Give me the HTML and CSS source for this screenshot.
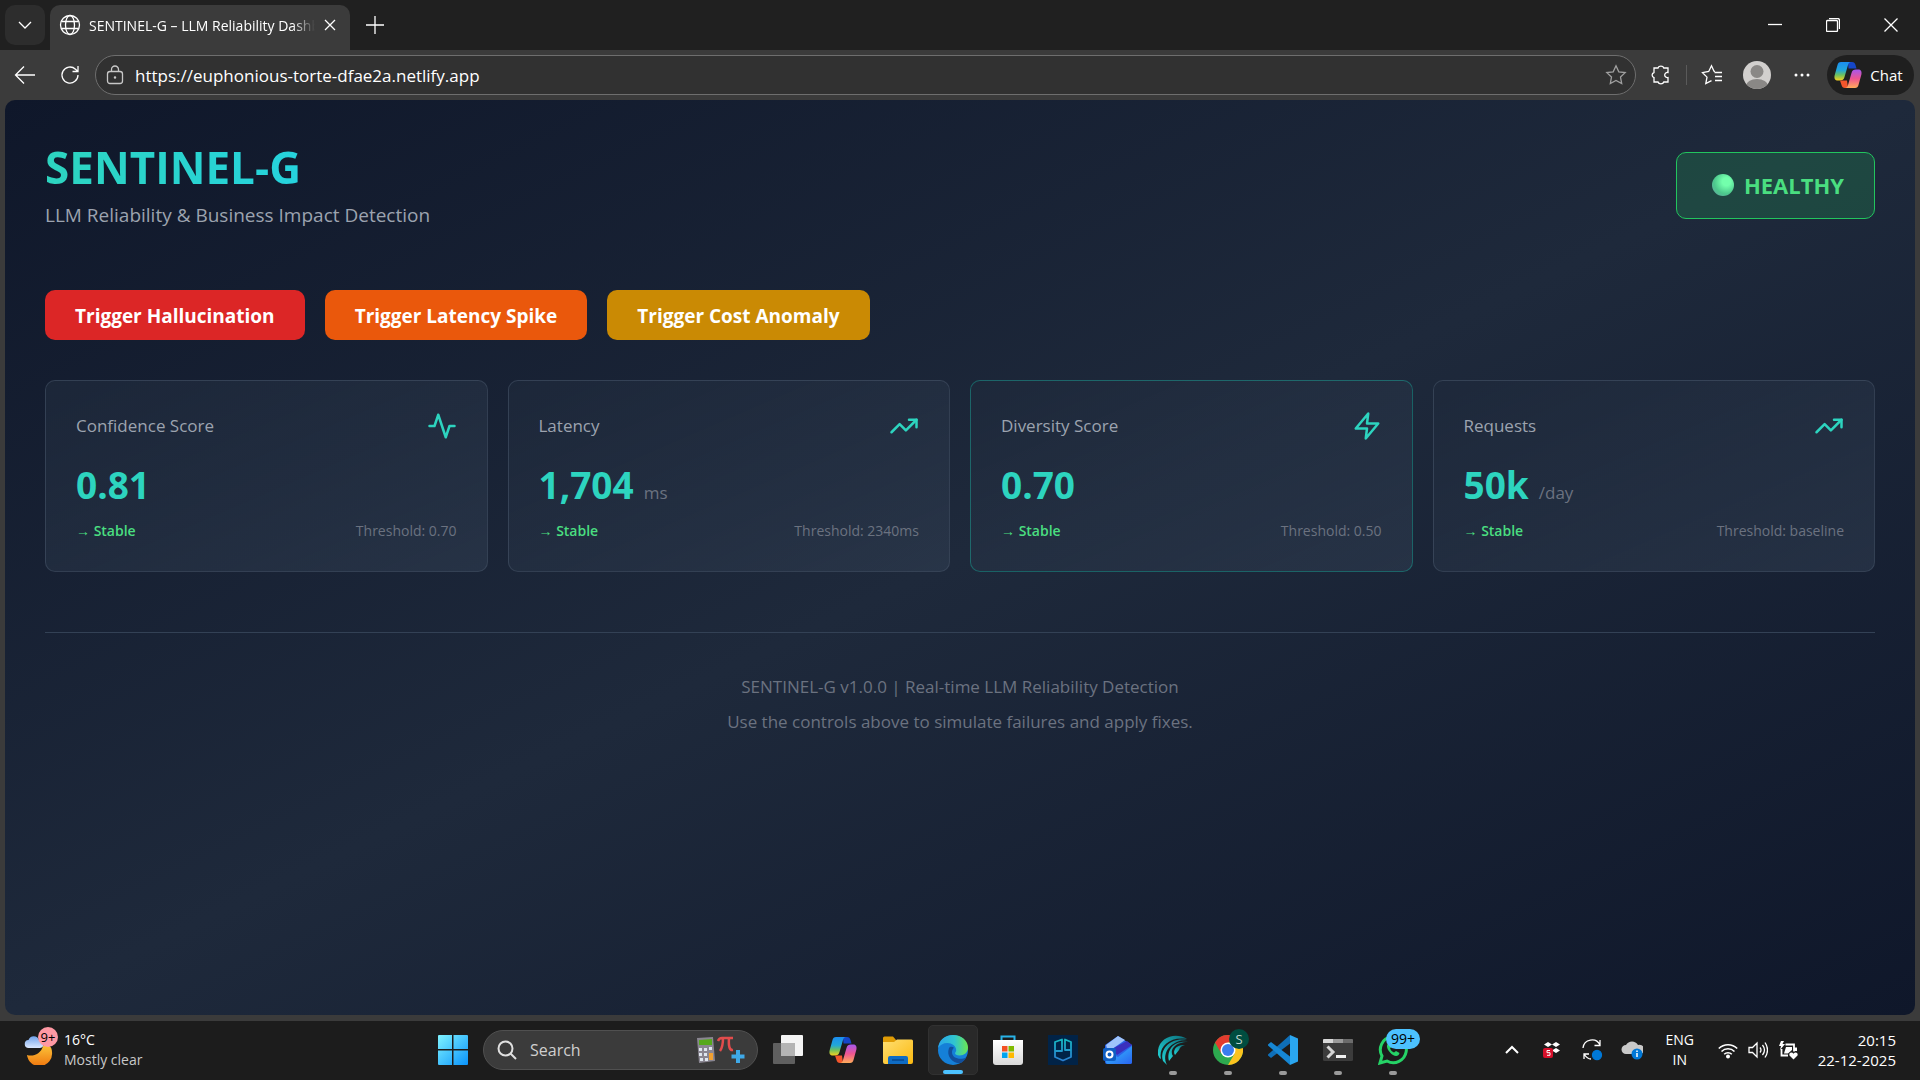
FILE: index.html
```html
<!DOCTYPE html>
<html lang="en">
<head>
    <meta charset="UTF-8">
    <meta name="viewport" content="width=device-width, initial-scale=1.0">
    <title>SENTINEL-G – LLM Reliability Dashboard</title>
    <link rel="stylesheet" href="styles.css">
</head>
<body>
    <!-- Shared symbols -->
    <svg class="defs" aria-hidden="true">
        <defs>
            <linearGradient id="copA" x1="0" y1="0" x2="0" y2="1">
                <stop offset="0" stop-color="#1b8df0"/><stop offset=".45" stop-color="#22a7d8"/>
                <stop offset=".7" stop-color="#6cc060"/><stop offset="1" stop-color="#f5d21f"/>
            </linearGradient>
            <linearGradient id="copB" x1="0" y1="0" x2="0" y2="1">
                <stop offset="0" stop-color="#a557ee"/><stop offset=".5" stop-color="#ee5590"/>
                <stop offset="1" stop-color="#ffac5a"/>
            </linearGradient>
            <linearGradient id="gWin" x1="0" y1="0" x2="1" y2="1">
                <stop offset="0" stop-color="#7ff3ff"/><stop offset="1" stop-color="#0a93fb"/>
            </linearGradient>
            <linearGradient id="gMoon" x1="0" y1="0" x2="0" y2="1">
                <stop offset="0" stop-color="#fbc43a"/><stop offset="1" stop-color="#f0780f"/>
            </linearGradient>
            <linearGradient id="gCloud" x1="0" y1="0" x2="0" y2="1">
                <stop offset="0" stop-color="#6fa2ea"/><stop offset="1" stop-color="#dbe8ff"/>
            </linearGradient>
            <linearGradient id="gFolder" x1="0" y1="0" x2="1" y2="1">
                <stop offset="0" stop-color="#ffdf72"/><stop offset="1" stop-color="#fbb910"/>
            </linearGradient>
            <linearGradient id="gEdge" x1="0" y1="0" x2="1" y2="0">
                <stop offset="0" stop-color="#2aa5ea"/><stop offset=".55" stop-color="#30c5cf"/><stop offset="1" stop-color="#6be650"/>
            </linearGradient>
            <linearGradient id="gBag" x1="0" y1="0" x2="0" y2="1">
                <stop offset="0" stop-color="#ffffff"/><stop offset="1" stop-color="#d9d9d9"/>
            </linearGradient>
            <linearGradient id="gTeal" x1="1" y1="0" x2="0" y2="1">
                <stop offset="0" stop-color="#0b6f7c"/><stop offset="1" stop-color="#22d3d6"/>
            </linearGradient>
            <linearGradient id="gMail" x1="0" y1="0" x2="1" y2="1">
                <stop offset="0" stop-color="#35c5ff"/><stop offset="1" stop-color="#2a63f0"/>
            </linearGradient>
            <linearGradient id="gHead" x1="0" y1="0" x2="0" y2="1">
                <stop offset="0" stop-color="#17b8c4"/><stop offset="1" stop-color="#2a7fd0"/>
            </linearGradient>
        </defs>
        <symbol id="copilot" viewBox="0 0 28 28">
            <path d="M14 1h4c2 0 3 1 3.500 3l1 3.500h-8z" fill="#1546c8"/>
            <path d="M7 1h10c-1.500 0-2.500 1-3 3l-3.500 12c-.8 2.600-2 3.500-4.500 3.500H4c-3 0-4-2-3.400-5L3.500 4C4 2 5 1 7 1z" fill="url(#copA)"/>
            <path d="M6 19.500h7l1 7.500h-3c-2 0-3-1-3.500-3z" fill="#f4562c"/>
            <path d="M21 27H11c1.500 0 2.500-1 3-3l3.500-12c.8-2.600 2-3.500 4.500-3.500h2c3 0 4 2 3.400 5L24.500 24c-.5 2-1.500 3-3.500 3z" fill="url(#copB)"/>
        </symbol>
        <symbol id="trend" viewBox="0 0 24 24">
            <path d="M22 7l-8.500 8.500-5-5L2 17"/>
            <path d="M16 7h6v6"/>
        </symbol>
    </svg>

    <div class="browser">
        <!-- Tab strip -->
        <div class="tab-strip">
            <button class="tab-menu" aria-label="Tab actions">
                <svg width="16" height="16" viewBox="0 0 16 16" class="line"><path d="M2 5l6 6 6-6"/></svg>
            </button>
            <div class="tab">
                <svg width="22" height="22" viewBox="0 0 22 22" class="line">
                    <circle cx="11" cy="11" r="9.500"/><ellipse cx="11" cy="11" rx="4.500" ry="9.500"/><path d="M2.500 7.500h17M2.500 14.500h17"/>
                </svg>
                <span class="tab-title">SENTINEL-G – LLM Reliability Dashboard</span>
                <button class="tab-close" aria-label="Close tab">
                    <svg width="12" height="12" viewBox="0 0 12 12" class="line"><path d="M1 1l10 10M11 1L1 11"/></svg>
                </button>
            </div>
            <button class="new-tab" aria-label="New tab">
                <svg width="20" height="20" viewBox="0 0 20 20" class="line"><path d="M10 1v18M1 10h18"/></svg>
            </button>
            <div class="window-controls">
                <button aria-label="Minimize"><svg width="14" height="14" viewBox="0 0 14 14" class="line"><path d="M0 6.500h14"/></svg></button>
                <button aria-label="Restore"><svg width="14" height="14" viewBox="0 0 14 14" class="line"><rect x=".5" y="2.500" width="11" height="11" rx="1"/><path d="M3 .5h8.500q2 0 2 2V11"/></svg></button>
                <button aria-label="Close"><svg width="14" height="14" viewBox="0 0 14 14" class="line"><path d="M.5.5l13 13M13.500.5l-13 13"/></svg></button>
            </div>
        </div>

        <!-- Address bar -->
        <div class="toolbar">
            <button class="tool" aria-label="Back">
                <svg width="22" height="20" viewBox="0 0 22 20" class="line"><path d="M21 10H1.500M10 1.500L1.500 10l8.500 8.500"/></svg>
            </button>
            <button class="tool" aria-label="Refresh">
                <svg width="20" height="20" viewBox="0 0 20 20" class="line"><path d="M18 10a8 8 0 1 1-2.500-5.800L18 6.500M18 1v5.500h-5.500"/></svg>
            </button>
            <div class="address">
                <svg width="18" height="20" viewBox="0 0 18 20" class="line light"><rect x="1.500" y="6.500" width="15" height="12" rx="2.500"/><path d="M5.500 6.500V4.500a3.500 3.500 0 0 1 7 0v2"/><circle cx="9" cy="12.500" r=".6"/></svg>
                <input type="text" aria-label="Address" value="https://euphonious-torte-dfae2a.netlify.app">
                <svg width="22" height="22" viewBox="0 0 22 22" class="line dim"><path d="M11 1.800l2.800 6 6.400.8-4.700 4.500 1.200 6.500L11 16.400l-5.700 3.200 1.200-6.500L1.800 8.600l6.400-.8z"/></svg>
            </div>
            <button class="tool" aria-label="Extensions">
                <svg width="22" height="22" viewBox="0 0 22 22" class="line"><path d="M4 4h4a3 2.600 0 0 1 5.800 0H18v4.500a2.600 2.600 0 1 0 0 5V18h-4.200a3 2.600 0 0 1-5.800 0H4v-4.500a2.600 2.600 0 0 1 0-5z"/></svg>
            </button>
            <span class="tool-sep"></span>
            <button class="tool" aria-label="Favorites">
                <svg width="22" height="22" viewBox="0 0 22 22" class="line"><path d="M14 7.500L13 7.300 10.500 1.800 7.700 7.500 1.500 8.600l4.500 4.500-1.200 6.500 5.700-3"/><path d="M13.500 8.500H21M14 12.500h7M14 16.500h7"/></svg>
            </button>
            <button class="tool" aria-label="Profile">
                <svg width="28" height="28" viewBox="0 0 28 28"><defs><clipPath id="av"><circle cx="14" cy="14" r="14"/></clipPath></defs><g clip-path="url(#av)"><rect width="28" height="28" fill="#d2d0ce"/><circle cx="14" cy="10.500" r="6.500" fill="#8a8886"/><ellipse cx="14" cy="25" rx="11" ry="7" fill="#8a8886"/></g></svg>
            </button>
            <button class="tool" aria-label="More">
                <svg width="16" height="4" viewBox="0 0 16 4" fill="#fff"><circle cx="2" cy="2" r="1.500"/><circle cx="8" cy="2" r="1.500"/><circle cx="14" cy="2" r="1.500"/></svg>
            </button>
            <button class="chat"><svg width="28" height="28"><use href="#copilot"/></svg>Chat</button>
        </div>

        <!-- Dashboard -->
        <main class="page">
            <header class="page-header">
                <div>
                    <h1>SENTINEL-G</h1>
                    <p class="subtitle">LLM Reliability &amp; Business Impact Detection</p>
                </div>
                <div class="status"><span class="status-dot"></span>HEALTHY</div>
            </header>

            <div class="controls">
                <button class="btn btn-red">Trigger Hallucination</button>
                <button class="btn btn-orange">Trigger Latency Spike</button>
                <button class="btn btn-yellow">Trigger Cost Anomaly</button>
            </div>

            <div class="cards">
                <section class="card">
                    <div class="card-head">
                        <h2>Confidence Score</h2>
                        <svg class="card-icon" viewBox="0 0 24 24"><path d="M22 12h-4l-3 9L9 3l-3 9H2"/></svg>
                    </div>
                    <div class="value">0.81</div>
                    <div class="card-foot"><span class="trend">→ Stable</span><span>Threshold: 0.70</span></div>
                </section>
                <section class="card">
                    <div class="card-head">
                        <h2>Latency</h2>
                        <svg class="card-icon"><use href="#trend"/></svg>
                    </div>
                    <div class="value">1,704<span class="unit">ms</span></div>
                    <div class="card-foot"><span class="trend">→ Stable</span><span>Threshold: 2340ms</span></div>
                </section>
                <section class="card card-active">
                    <div class="card-head">
                        <h2>Diversity Score</h2>
                        <svg class="card-icon" viewBox="0 0 24 24"><path d="M13 2L3 14h9l-1 8 10-12h-9z"/></svg>
                    </div>
                    <div class="value">0.70</div>
                    <div class="card-foot"><span class="trend">→ Stable</span><span>Threshold: 0.50</span></div>
                </section>
                <section class="card">
                    <div class="card-head">
                        <h2>Requests</h2>
                        <svg class="card-icon"><use href="#trend"/></svg>
                    </div>
                    <div class="value">50k<span class="unit">/day</span></div>
                    <div class="card-foot"><span class="trend">→ Stable</span><span>Threshold: baseline</span></div>
                </section>
            </div>

            <footer class="page-footer">
                <p>SENTINEL-G v1.0.0 | Real-time LLM Reliability Detection</p>
                <p>Use the controls above to simulate failures and apply fixes.</p>
            </footer>
        </main>
    </div>

    <!-- Taskbar -->
    <div class="taskbar">
        <div class="weather">
            <div class="weather-icon">
                <svg width="30" height="30" viewBox="0 0 30 30">
                    <path d="M3 20c6 2 14-1 16-9 3-2 9-1 9 6a12.500 12.500 0 0 1-25 3z" fill="url(#gMoon)"/>
                    <path d="M5 13a4 4 0 0 1-.5-8 5.500 5.500 0 0 1 10.500 0 4 4 0 0 1 1 8z" fill="url(#gCloud)"/>
                </svg>
                <span class="weather-badge">9+</span>
            </div>
            <div class="weather-text"><span>16°C</span><span class="muted">Mostly clear</span></div>
        </div>

        <div class="apps">
            <button class="app" aria-label="Start">
                <svg width="30" height="30" viewBox="0 0 30 30" fill="url(#gWin)"><path d="M1 0h13v14H0V1q0-1 1-1zM15.500 0H29q1 0 1 1v13H15.500zM0 15.500h14V30H1q-1 0-1-1zM15.500 15.500H30V29q0 1-1 1H15.500z"/></svg>
            </button>
            <label class="search">
                <svg width="20" height="20" viewBox="0 0 20 20" fill="none" stroke="#e0e0e0" stroke-width="2"><circle cx="8.500" cy="8.500" r="7"/><path d="M13.500 13.500L19 19"/></svg>
                <input type="text" placeholder="Search">
                <svg width="50" height="28" viewBox="0 0 50 28">
                    <path d="M1 2l16-1 2 24-16 2z" fill="#8a8691"/><path d="M3 4l13-1v6H3z" fill="#56a81c"/>
                    <path d="M3 12h3v3H3zM8 12h3v3H8zM13 11h3v3h-3zM3 17h3v3H3zM8 17h3v3H8zM4 22h3v3H4zM9 22h3v3H9z" fill="#dfe6ee"/><path d="M13 17h4v7h-4z" fill="#f0a030"/>
                    <path d="M22 5q1-3 4-3h11M27 2q0 9-3 13M33 2q-1 13 4 12" fill="none" stroke="#e24c4c" stroke-width="2.500"/>
                    <path d="M42 14v13M35.500 20.500h13" stroke="#3fa9e8" stroke-width="4"/>
                </svg>
            </label>
            <button class="app" aria-label="Task view">
                <svg width="30" height="30" viewBox="0 0 30 30"><rect y="8" width="22" height="21" rx="1" fill="#5f5f5f"/><rect x="8" width="22" height="21" rx="1" fill="#f4f4f4"/><path d="M8 8h14v13H8z" fill="#b4b4b4"/></svg>
            </button>
            <button class="app" aria-label="Copilot"><svg width="28" height="28"><use href="#copilot"/></svg></button>
            <button class="app" aria-label="File Explorer">
                <svg width="30" height="28" viewBox="0 0 30 28"><path d="M0 2q0-1.500 1.500-1.500H10L13 4v4H0z" fill="#e09c05"/><path d="M0 6h11l3-2.500h14.500Q30 3.500 30 5v21q0 2-2 2H2q-2 0-2-2z" fill="url(#gFolder)"/><path d="M5 28v-6q0-2 2-2h16q2 0 2 2v6z" fill="#0f6cc4"/><path d="M9 24h12" stroke="#07478f" stroke-width="1.500"/></svg>
            </button>
            <button class="app app-active" aria-label="Microsoft Edge">
                <svg width="32" height="32" viewBox="0 0 32 32"><circle cx="16" cy="16" r="15" fill="#1580d8"/><path d="M1 14C2 6 8 1 16 1c9 0 15 6 15 12.500 0 5-4 8-8.500 8-3 0-4.500-1-4.500-2.200 0-1 1.200-1.300 1.200-3.300C19 12 15 9 10.500 9 6 9 3 11 1 14z" fill="url(#gEdge)"/><path d="M12 14c-3 8 3 15 11 15.300 3-1.300 5-3.300 6.300-5.800C24 26 15 25 15 18c0-2 1-3.500 2-4.300-1.500-1.200-4-1.500-5 .3z" fill="#124f9c"/></svg>
            </button>
            <button class="app" aria-label="Microsoft Store">
                <svg width="30" height="30" viewBox="0 0 30 30"><path d="M8.500 6V1.500h13V6" fill="none" stroke="#28b3e8" stroke-width="2"/><path d="M0 5h30v22q0 3-3 3H3q-3 0-3-3z" fill="url(#gBag)"/><path d="M9 11h5.500v5.500H9z" fill="#f25022"/><path d="M15.500 11H21v5.500h-5.500z" fill="#7fba00"/><path d="M9 17.500h5.500V23H9z" fill="#00a4ef"/><path d="M15.500 17.500H21V23h-5.500z" fill="#ffb900"/></svg>
            </button>
            <button class="app" aria-label="Assistant">
                <svg width="30" height="30" viewBox="0 0 30 30"><path d="M0 0h30v30H0z" fill="#012347"/><path d="M14 4.500L7 7v9h7zM17 4.500L23 7v8h-6zM7 15v7l8 3.500 8-3.500v-8" fill="none" stroke="url(#gHead)" stroke-width="1.800" stroke-linejoin="round"/></svg>
            </button>
            <button class="app" aria-label="Outlook">
                <svg width="30" height="30" viewBox="0 0 30 30"><path d="M2 10L15 1l14 9v17q0 2-2 2H4q-2 0-2-2z" fill="#2b62e8"/><path d="M3 10L15 1l7 4L5 17z" fill="#9fc4fb"/><path d="M9 14L24 6l5 4L14 20z" fill="#3a2fbd"/><path d="M3 17l12 5 14-11v16q0 2-2 2H5q-2 0-2-2z" fill="url(#gMail)"/><rect y="13" width="13" height="13" rx="2" fill="#0f5fc4"/><circle cx="6.500" cy="19.500" r="3" fill="none" stroke="#fff" stroke-width="2"/></svg>
            </button>
            <button class="app app-open" aria-label="Music">
                <svg width="30" height="30" viewBox="0 0 30 30" fill="url(#gTeal)"><path d="M29 4C16-4-2 4 0 20q1 3 3 4C0 12 12 1 29 4z"/><path d="M29 5C14 2 1 13 5 26l4 4C3 18 13 5 29 5z"/><path d="M30 7C17 5 8 14 11 26l4-5C11 14 18 7 30 7z"/><path d="M27 10c-8-1-13 5-10 10l4-5q1-4 6-5z"/></svg>
            </button>
            <button class="app app-open" aria-label="Google Chrome">
                <svg width="30" height="30" viewBox="0 0 30 30"><circle cx="15" cy="15" r="15" fill="#2da94f"/><path d="M2 7.500A15 15 0 0 1 28 7.500H15L8.500 18.700z" fill="#e33b2e"/><path d="M28 7.500A15 15 0 0 1 15 30l6.500-11.300L15 7.500z" fill="#fcc31e"/><circle cx="15" cy="15" r="7.500" fill="#fff"/><circle cx="15" cy="15" r="6" fill="#3b7ded"/></svg>
                <span class="badge badge-profile">S</span>
            </button>
            <button class="app app-open" aria-label="Visual Studio Code">
                <svg width="30" height="30" viewBox="0 0 30 30"><path d="M22 0l8 3.500v23L22 30z" fill="#2aa6f0"/><path d="M22 0v8.500L3 23l-3-2.500v-1z" fill="#0f6fb8"/><path d="M22 30v-8.500L3 7 0 9.500v1z" fill="#1687d4"/></svg>
            </button>
            <button class="app app-open" aria-label="Terminal">
                <svg width="30" height="22" viewBox="0 0 30 22"><rect width="30" height="22" rx="1.500" fill="#3c3c3c"/><path d="M1 0h9v4H0V1q0-1 1-1z" fill="#d8d8d8"/><path d="M10 0h10v4H10z" fill="#9b9b9b"/><path d="M20 0h9q1 0 1 1v3H20z" fill="#6c6c6c"/><path d="M4.500 7.500L10 13l-5.500 5.500" fill="none" stroke="#d6d6d6" stroke-width="3"/><path d="M13 17.500h10" stroke="#f2f2f2" stroke-width="3"/></svg>
            </button>
            <button class="app app-open" aria-label="WhatsApp">
                <svg width="30" height="30" viewBox="0 0 30 30"><path d="M2 28l2-7A13 13 0 1 1 9 26z" fill="none" stroke="#25d366" stroke-width="3"/><path d="M10 8.500c-3 3 1 9 5 11.500 3 2 6 1 6.500-2l-3.500-2-2 1.500c-2-1-3-2-4-4l1.500-1.500L12 8.500z" fill="#25d366"/></svg>
                <span class="badge badge-count">99+</span>
            </button>
        </div>

        <div class="tray">
            <button aria-label="Show hidden icons"><svg width="16" height="16" viewBox="0 0 16 16" fill="none" stroke="#fff" stroke-width="2"><path d="M2 11l6-6 6 6"/></svg></button>
            <button aria-label="Dropbox"><svg width="20" height="20" viewBox="0 0 20 20"><path d="M6 2l4 2.500L6 7 2 4.500zM14 2l4 2.500L14 7l-4-2.500zM14 8l4 2.500-4 2.500-4-2.500z" fill="#fff"/><rect x="1" y="8" width="10" height="10" rx="2" fill="#d6102b"/><path d="M8 10.500H5v2.200h3v2.600H5" fill="none" stroke="#fff"/></svg></button>
            <button aria-label="Updates"><svg width="22" height="22" viewBox="0 0 22 22" class="line"><path d="M2 9a9 9 0 0 1 17-3M19 1v5.500h-5.500M3 20v-5h5M3 15c2 3 4 5 7 5"/><circle cx="16" cy="16" r="4.500" fill="#0078d7" stroke="#0078d7"/></svg></button>
            <button aria-label="OneDrive"><svg width="22" height="22" viewBox="0 0 22 22"><path d="M5 15a4.500 4.500 0 0 1 0-9 7 7 0 0 1 12 0 4.500 4.500 0 0 1 3 9z" fill="#c9c9c9"/><circle cx="16" cy="15" r="5.500" fill="#0078d7"/><path d="M16 14v4M16 11.500V13" stroke="#fff" stroke-width="1.500"/></svg></button>
            <div class="lang"><span>ENG</span><span>IN</span></div>
            <div class="quick">
                <svg width="20" height="20" viewBox="0 0 20 20" fill="none" stroke="#fff" stroke-width="1.600"><path d="M.8 8.500a13 13 0 0 1 18.400 0M3.500 11.500a9.200 9.200 0 0 1 13 0M6.200 14.300a5.400 5.400 0 0 1 7.600 0"/><circle cx="10" cy="16.500" r="1.200" fill="#fff"/></svg>
                <svg width="20" height="20" viewBox="0 0 20 20" class="line"><path d="M1 7.500h3.500L9 3v14l-4.500-4.500H1zM12 7.500q2 2.500 0 5M14.500 5q4 5 0 10M17 2.500q5 7.500 0 15"/></svg>
                <svg width="20" height="20" viewBox="0 0 20 20"><path d="M7.500 4.500H16v7M3.500 9v6.500H10" fill="none" stroke="#fff" stroke-width="1.800"/><path d="M8 7h6v3l-4 3.500H6z" fill="#fff"/><path d="M3 1L1 6h2L2 10l5-6H4.500L6 1z" fill="#fff"/><path d="M16 11h3V7.500h-3z" fill="#fff"/><path d="M15.500 19.500l-4-4c-1-3 2.500-4 4-1.800 1.500-2.200 5-1.200 4 1.800z" fill="#fff"/></svg>
            </div>
            <div class="clock"><span>20:15</span><span>22-12-2025</span></div>
        </div>
    </div>
</body>
</html>
```
FILE: styles.css
```css
* {
    box-sizing: border-box;
}

body {
    font-family: "Open Sans", "Noto Sans", sans-serif;
    margin: 0;
    min-height: 100vh;
    display: flex;
    flex-direction: column;
    background-color: #3b3b3b;
    color: #ffffff;
}

h1, h2, p {
    margin: 0;
}

button {
    font-family: inherit;
    color: inherit;
    background: none;
    border: none;
    padding: 0;
    cursor: pointer;
    display: flex;
    align-items: center;
    justify-content: center;
}

input {
    font-family: inherit;
    color: #ffffff;
    background: none;
    border: none;
    outline: none;
    padding: 0;
    flex: 1;
    min-width: 0;
}

svg {
    flex-shrink: 0;
}

.defs {
    position: absolute;
    width: 0;
    height: 0;
}

.line {
    fill: none;
    stroke: #ffffff;
    stroke-width: 1.3;
}

.light {
    stroke: #c8c8c8;
}

.dim {
    stroke: #a0a0a0;
}

/* Browser window */
.browser {
    flex: 1;
    display: flex;
    flex-direction: column;
}

.tab-strip {
    display: flex;
    align-items: center;
    height: 50px;
    padding-left: 5px;
    gap: 5px;
    background: #202020;
}

.tab-menu {
    width: 40px;
    height: 40px;
    border-radius: 10px;
    background: #2d2d2d;
}

.tab {
    display: flex;
    align-items: center;
    align-self: flex-end;
    width: 300px;
    height: 45px;
    padding: 0 13px 5px 9px;
    gap: 8px;
    background: #3b3b3b;
    border-radius: 10px 10px 0 0;
}

.tab-title {
    flex: 1;
    overflow: hidden;
    white-space: nowrap;
    font-size: 14px;
    -webkit-mask-image: linear-gradient(to right, #000 90%, transparent);
    mask-image: linear-gradient(to right, #000 90%, transparent);
}

.tab-close {
    width: 14px;
    height: 22px;
}

.new-tab {
    width: 40px;
    height: 40px;
}

.window-controls {
    display: flex;
    margin-left: auto;
}

.window-controls button {
    width: 58px;
    height: 50px;
}

.toolbar {
    display: flex;
    align-items: center;
    height: 50px;
    padding: 0 6px 0 5px;
    gap: 5px;
}

.tool {
    width: 40px;
    height: 40px;
}

.tool-sep {
    width: 1px;
    height: 20px;
    background: #5a5a5a;
}

.address {
    flex: 1;
    display: flex;
    align-items: center;
    height: 40px;
    padding: 0 8px 0 10px;
    gap: 11px;
    background: #313131;
    border: 1px solid #6e6e6e;
    border-radius: 20px;
}

.address input {
    font-size: 17px;
}

.chat {
    width: 87px;
    height: 40px;
    padding-right: 4px;
    gap: 8px;
    font-size: 15px;
    background: #1f1f1f;
    border-radius: 20px;
}

/* Dashboard */
.page {
    flex: 1;
    margin: 0 5px 6px;
    padding: 40px;
    border-radius: 10px;
    background: linear-gradient(to bottom right, #0f172a, #1e293b, #0f172a);
}

.page-header {
    display: flex;
    justify-content: space-between;
    align-items: center;
    margin-bottom: 60px;
}

.page-header h1 {
    margin-bottom: 6px;
    font-size: 44px;
    line-height: 55px;
    font-weight: 700;
    background: linear-gradient(to right, #2dd4bf, #22d3ee);
    -webkit-background-clip: text;
    background-clip: text;
    color: transparent;
}

.subtitle {
    font-size: 19px;
    line-height: 29px;
    color: #9ca3af;
}

.status {
    display: flex;
    align-items: center;
    height: 67px;
    padding: 0 30px 0 35px;
    gap: 10px;
    font-size: 22px;
    font-weight: 700;
    color: #4ade80;
    background: rgba(34, 197, 94, 0.2);
    border: 1px solid #22c55e;
    border-radius: 10px;
}

.status-dot {
    width: 22px;
    height: 22px;
    border-radius: 50%;
    background: radial-gradient(circle at 65% 35%, #73ffac 20%, #4cc78c 60%, #6aa0a8 100%);
}

.controls {
    display: flex;
    gap: 20px;
    margin-bottom: 40px;
}

.btn {
    height: 50px;
    padding: 1px 30px 0;
    font-size: 19px;
    font-weight: 700;
    border-radius: 10px;
}

.btn-red {
    background: #dc2626;
}

.btn-orange {
    background: #ea580c;
}

.btn-yellow {
    background: #ca8a04;
}

.cards {
    display: grid;
    grid-template-columns: repeat(4, 1fr);
    gap: 20px;
    margin-bottom: 60px;
}

.card {
    padding: 30px;
    border: 1px solid rgba(71, 85, 105, 0.5);
    border-radius: 10px;
    background: linear-gradient(to bottom right, rgba(30, 41, 59, 0.8), rgba(51, 65, 85, 0.5));
}

.card-active {
    border-color: rgba(20, 184, 166, 0.4);
}

.card-head {
    display: flex;
    justify-content: space-between;
    align-items: center;
    margin-bottom: 15px;
}

.card-head h2 {
    font-size: 17px;
    line-height: 30px;
    font-weight: 500;
    color: #9ca3af;
}

.card-icon {
    width: 30px;
    height: 30px;
    fill: none;
    stroke: #2dd4bf;
    stroke-width: 2;
    stroke-linecap: round;
    stroke-linejoin: round;
}

.value {
    display: flex;
    align-items: baseline;
    gap: 10px;
    height: 58px;
    margin-bottom: 7px;
    font-size: 37px;
    line-height: 58px;
    font-weight: 700;
    color: #2dd4bf;
}

.unit {
    font-size: 17px;
    line-height: 20px;
    font-weight: 400;
    color: #6b7280;
}

.card-foot {
    display: flex;
    justify-content: space-between;
    font-size: 14px;
    line-height: 20px;
    color: #6b7280;
}

.trend {
    font-weight: 600;
    color: #4ade80;
}

.page-footer {
    display: flex;
    flex-direction: column;
    gap: 7px;
    padding-top: 40px;
    border-top: 1px solid #334155;
    text-align: center;
    font-size: 17px;
    line-height: 28px;
    color: #6b7280;
}

/* Taskbar */
.taskbar {
    display: grid;
    grid-template-columns: 428px auto 1fr;
    align-items: center;
    height: 59px;
    padding-bottom: 2px;
    background: #1c1c1c;
    font-size: 14px;
    line-height: 20px;
}

.weather {
    display: flex;
    align-items: center;
    gap: 10px;
    padding-left: 24px;
}

.weather-icon {
    position: relative;
    height: 30px;
}

.weather-badge {
    position: absolute;
    top: -8px;
    left: 14px;
    width: 20px;
    height: 20px;
    border-radius: 50%;
    background: #ff99a4;
    color: #000000;
    font-size: 13px;
    text-align: center;
}

.weather-text, .lang, .clock {
    display: flex;
    flex-direction: column;
}

.muted {
    color: #c8c8c8;
}

.apps {
    display: flex;
    align-items: center;
    gap: 5px;
}

.app {
    position: relative;
    width: 50px;
    height: 50px;
    border-radius: 5px;
}

.app-active {
    background: #292929;
    border: 1px solid #313131;
}

.app-active::after, .app-open::after {
    content: '';
    position: absolute;
    bottom: 0;
    width: 20px;
    height: 4px;
    border-radius: 2px;
    background: #4cc2ff;
}

.app-open::after {
    width: 8px;
    background: #9a9a9a;
}

.badge {
    position: absolute;
    height: 20px;
    border-radius: 10px;
    line-height: 20px;
}

.badge-profile {
    top: 4px;
    right: 4px;
    width: 20px;
    background: #004d40;
    color: #c0d4d0;
    font-size: 13px;
}

.badge-count {
    top: 4px;
    right: -2px;
    width: 34px;
    background: #4cc2ff;
    color: #000000;
    font-size: 14px;
}

.search {
    display: flex;
    align-items: center;
    width: 275px;
    height: 40px;
    padding: 0 11px 0 13px;
    gap: 13px;
    background: #3b3b3b;
    border: 1px solid #505050;
    border-radius: 20px;
}

.search input {
    font-size: 16px;
}

.search input::placeholder {
    color: #cfcfcf;
    opacity: 1;
}

.tray {
    display: flex;
    align-items: center;
    justify-content: flex-end;
    padding-right: 24px;
}

.tray button {
    width: 40px;
    height: 50px;
}

.lang {
    width: 56px;
    text-align: center;
}

.quick {
    display: flex;
    gap: 10px;
    margin: 0 20px 0 10px;
}

.clock {
    font-size: 15px;
    text-align: right;
}
```
